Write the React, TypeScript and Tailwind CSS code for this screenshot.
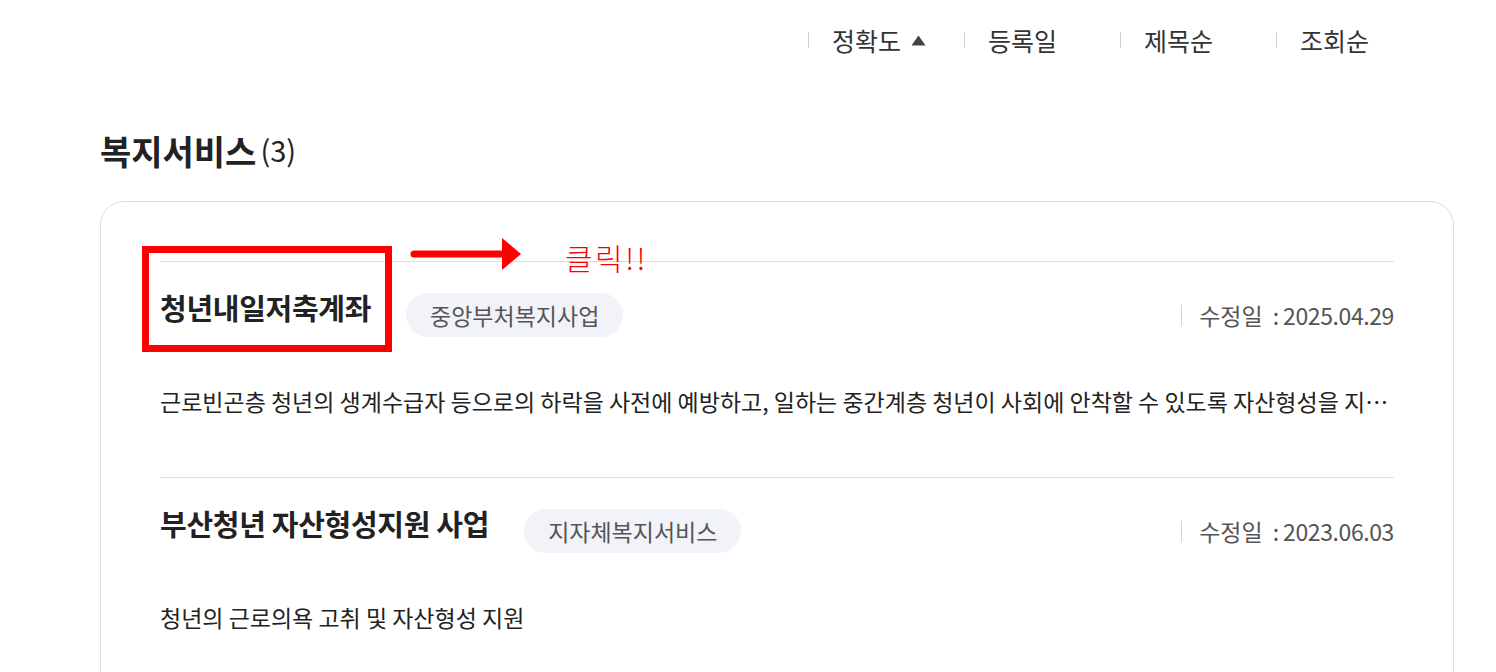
import React from 'react';

const SORTS = [
  { id: 'accuracy', label: '정확도', active: true },
  { id: 'date', label: '등록일' },
  { id: 'title', label: '제목순' },
  { id: 'views', label: '조회순' },
];

const SERVICES = [
  {
    id: 1,
    title: '청년내일저축계좌',
    tag: '중앙부처복지사업',
    updated: '2025.04.29',
    desc: '근로빈곤층 청년의 생계수급자 등으로의 하락을 사전에 예방하고, 일하는 중간계층 청년이 사회에 안착할 수 있도록 자산형성을 지원하는 사업입니다.',
    highlight: true,
  },
  {
    id: 2,
    title: '부산청년 자산형성지원 사업',
    tag: '지자체복지서비스',
    updated: '2023.06.03',
    desc: '청년의 근로의욕 고취 및 자산형성 지원',
  },
];

export default function App() {
  return (
    <div
      className="min-h-[672px] bg-white text-[#222]"
      style={{ fontFamily: '"Noto Sans CJK KR", "Noto Sans", sans-serif' }}
    >
      <div className="ml-[100px] w-[1354px]">
        {/* sort tabs */}
        <div className="flex justify-end pt-[24px] pr-[22px]">
          {SORTS.map(sort => (
            <div key={sort.id} className="flex h-[32px] w-[156px] items-center">
              <span className="h-[16px] w-px bg-[#d4d4d4]" />
              <span className="ml-[23px] flex items-center text-[25px] leading-[32px] text-[#333]">
                {sort.label}
                {sort.active && (
                  <svg width="15" height="11" viewBox="0 0 15 11" className="ml-[10px]">
                    <path d="M7.5 0.5 L14.5 10.5 L0.5 10.5 Z" fill="#444" />
                  </svg>
                )}
              </span>
            </div>
          ))}
        </div>

        <h2 className="mt-[74px] flex h-[40px] items-center text-[34px] font-semibold">
          복지서비스
          <span className="ml-[4px] text-[29px] font-normal">(3)</span>
        </h2>

        <div className="mt-[31px] rounded-[24px] border border-[#dedede] px-[59px] pt-[59px] pb-[40px]">
          {SERVICES.map(item => (
            <div key={item.id} className="border-t border-[#dcdcdc] pt-[31px] pb-[60px]">
              <div className="flex h-[44px] items-center">
                <div className="relative pb-[16px]">
                  <h3 className="text-[29px] font-bold leading-[40px] tracking-[-0.3px] text-[#222]">{item.title}</h3>
                  {item.highlight && (
                    <>
                      <div className="absolute left-[-18px] top-[-41px] h-[106px] w-[250px] border-[7px] border-[#ff0000]" />
                      <svg
                        width="114"
                        height="34"
                        viewBox="0 0 114 34"
                        className="absolute left-[250px] top-[-50px]"
                      >
                        <line x1="4" y1="17" x2="96" y2="17" stroke="#ff0000" strokeWidth="7" strokeLinecap="round" />
                        <path d="M92 1 L111 17 L92 33 Z" fill="#ff0000" />
                      </svg>
                      <span className="absolute left-[405px] top-[-50px] whitespace-nowrap text-[30px] font-light leading-[40px] tracking-[2.5px] text-[#ff0000]">
                        클릭!!
                      </span>
                    </>
                  )}
                </div>
                <span className="ml-[35px] flex h-[44px] items-center rounded-full bg-[#f2f2f9] px-[24px] text-[23px] text-[#555]">
                  {item.tag}
                </span>
                <div className="ml-auto flex items-center text-[23px] text-[#555]">
                  <span className="mr-[17px] h-[21px] w-px bg-[#d4d4d4]" />
                  <span>수정일</span>
                  <span className="ml-[10px] mr-[4px]">:</span>
                  <span className="tracking-[-0.4px]">{item.updated}</span>
                </div>
              </div>
              <p className="mt-[48px] truncate text-[23px] leading-[32px] text-[#222]">{item.desc}</p>
            </div>
          ))}
        </div>
      </div>
    </div>
  );
}
